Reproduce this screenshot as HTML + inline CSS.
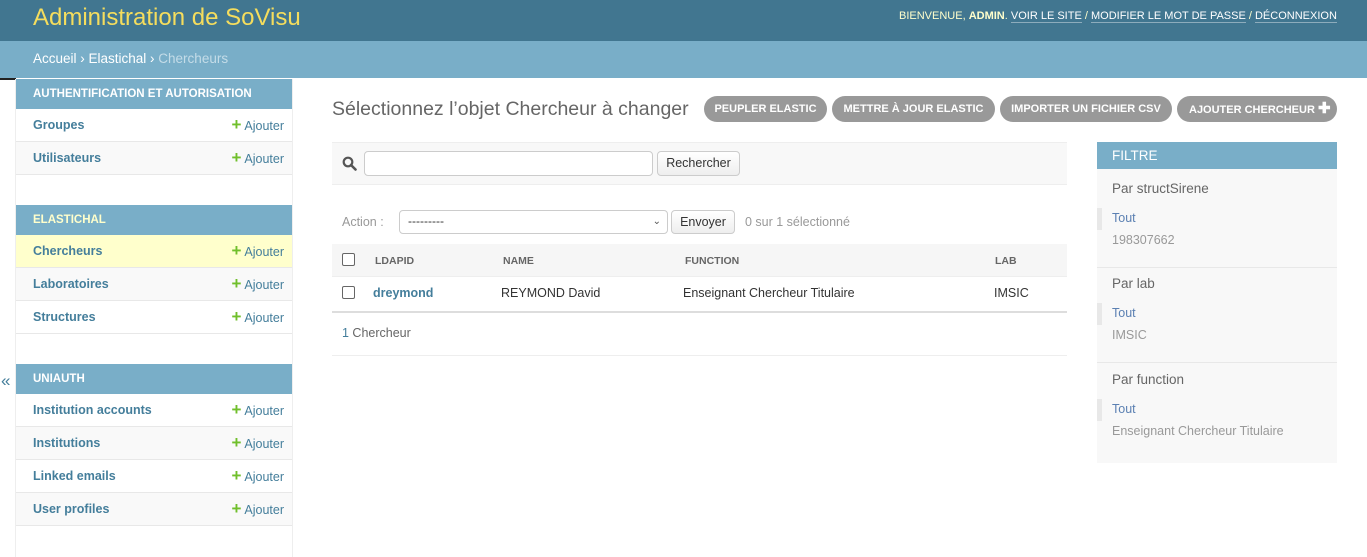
<!DOCTYPE html>
<html><head><meta charset="utf-8"><style>
*{margin:0;padding:0;box-sizing:border-box}
body{width:1367px;height:557px;overflow:hidden;background:#fff;font-family:"Liberation Sans",sans-serif;color:#333;position:relative;font-size:13px}
.a{position:absolute;white-space:nowrap}
#hdr{left:0;top:0;width:1367px;height:41px;background:#417690}
#bc{left:0;top:41px;width:1367px;height:37px;background:#79aec8}
.cap{background:#79aec8;color:#fff;font-size:11.5px;font-weight:bold;height:30px;line-height:30px;padding-left:17px;width:276px;left:16px}
.row{left:16px;width:276px;height:33px;line-height:32px;border-bottom:1px solid #e8e8e8;padding-left:17px;font-weight:bold;color:#447e9b;font-size:12.5px}
.row .ad{position:absolute;right:8px;top:0;font-weight:normal;color:#447e9b;font-size:12.5px}
.row .ad b{color:#70bf2b;font-size:17px;margin-right:3px}
.btn{top:96px;height:26px;line-height:26px;border-radius:13px;background:#999;color:#fff;font-size:11px;font-weight:bold;text-align:center}
.gray{color:#999}
</style></head><body>
<div class="a" id="hdr"></div>
<div class="a" style="left:33px;top:4px;font-size:24px;color:#f5dd5d">Administration de SoVisu</div>
<div class="a" style="left:899px;top:10px;font-size:11px;color:#ffc">BIENVENUE, <b>ADMIN</b>. <span style="color:#fff;border-bottom:1px solid rgba(255,255,255,.4)">VOIR LE SITE</span> / <span style="color:#fff;border-bottom:1px solid rgba(255,255,255,.4)">MODIFIER LE MOT DE PASSE</span> / <span style="color:#fff;border-bottom:1px solid rgba(255,255,255,.4)">DÉCONNEXION</span></div>
<div class="a" id="bc"></div>
<div class="a" style="left:33px;top:51px;font-size:13.5px;color:#fff">Accueil › Elastichal › <span style="color:#c4dce8">Chercheurs</span></div>
<div class="a" style="left:0;top:78px;width:16px;height:2px;background:#222"></div>
<div class="a" style="left:15px;top:79px;width:278px;height:478px;border-left:1px solid #eee;border-right:1px solid #eee"></div>
<div class="a" style="left:1px;top:371px;font-size:17px;color:#447e9b">«</div>

<div class="a cap" style="top:79px">AUTHENTIFICATION ET AUTORISATION</div>
<div class="a row" style="top:109px">Groupes<span class="ad"><b>+</b>Ajouter</span></div>
<div class="a row" style="top:142px;background:#f9f9f9">Utilisateurs<span class="ad"><b>+</b>Ajouter</span></div>

<div class="a cap" style="top:205px;color:#ffc">ELASTICHAL</div>
<div class="a row" style="top:235px;background:#ffc">Chercheurs<span class="ad"><b>+</b>Ajouter</span></div>
<div class="a row" style="top:268px;background:#f9f9f9">Laboratoires<span class="ad"><b>+</b>Ajouter</span></div>
<div class="a row" style="top:301px">Structures<span class="ad"><b>+</b>Ajouter</span></div>

<div class="a cap" style="top:364px">UNIAUTH</div>
<div class="a row" style="top:394px">Institution accounts<span class="ad"><b>+</b>Ajouter</span></div>
<div class="a row" style="top:427px;background:#f9f9f9">Institutions<span class="ad"><b>+</b>Ajouter</span></div>
<div class="a row" style="top:460px">Linked emails<span class="ad"><b>+</b>Ajouter</span></div>
<div class="a row" style="top:493px;background:#f9f9f9">User profiles<span class="ad"><b>+</b>Ajouter</span></div>

<div class="a" style="left:332px;top:98px;font-size:19.5px;color:#666">Sélectionnez l’objet Chercheur à changer</div>
<div class="a btn" style="left:704px;width:123px">PEUPLER ELASTIC</div>
<div class="a btn" style="left:832px;width:163px">METTRE À JOUR ELASTIC</div>
<div class="a btn" style="left:1000px;width:172px">IMPORTER UN FICHIER CSV</div>
<div class="a btn" style="left:1177px;width:160px;text-align:left;padding-left:12px">AJOUTER CHERCHEUR <span style="font-size:15px">✚</span></div>

<div class="a" style="left:332px;top:142px;width:735px;height:43px;background:#f8f8f8;border-top:1px solid #eee;border-bottom:1px solid #eee"></div>
<svg class="a" style="left:342px;top:156px" width="15" height="15" viewBox="0 0 15 15"><circle cx="6" cy="6" r="4.3" fill="none" stroke="#555" stroke-width="2.2"/><path d="M9 9l4.5 4.5" stroke="#555" stroke-width="2.6" stroke-linecap="round"/></svg>
<div class="a" style="left:364px;top:151px;width:289px;height:25px;border:1px solid #ccc;border-radius:4px;background:#fff"></div>
<div class="a" style="left:657px;top:151px;width:83px;height:25px;border:1px solid #ccc;border-radius:4px;background:linear-gradient(#fff,#eee);font-size:12.5px;line-height:23px;text-align:center">Rechercher</div>

<div class="a gray" style="left:342px;top:215px;font-size:12.5px">Action :</div>
<div class="a" style="left:399px;top:210px;width:269px;height:24px;border:1px solid #ccc;border-radius:4px;background:#fff;font-size:12px;line-height:21px;padding-left:8px">---------<span style="position:absolute;right:6px;top:0;font-size:10px;color:#555">⌄</span></div>
<div class="a" style="left:671px;top:210px;width:64px;height:24px;border:1px solid #ccc;border-radius:4px;background:linear-gradient(#fff,#eee);font-size:12.5px;line-height:23px;text-align:center">Envoyer</div>
<div class="a gray" style="left:745px;top:215px;font-size:12.5px">0 sur 1 sélectionné</div>

<div class="a" style="left:332px;top:244px;width:735px;height:33px;background:#f6f6f6;border-bottom:1px solid #eee"></div>
<div class="a" style="left:342px;top:253px;width:13px;height:13px;border:1px solid #666;border-radius:2px;background:#fff"></div>
<div class="a" style="left:375px;top:255px;font-size:10.5px;font-weight:bold;color:#666">LDAPID</div>
<div class="a" style="left:503px;top:255px;font-size:10.5px;font-weight:bold;color:#666">NAME</div>
<div class="a" style="left:685px;top:255px;font-size:10.5px;font-weight:bold;color:#666">FUNCTION</div>
<div class="a" style="left:995px;top:255px;font-size:10.5px;font-weight:bold;color:#666">LAB</div>
<div class="a" style="left:342px;top:286px;width:13px;height:13px;border:1px solid #666;border-radius:2px;background:#fff"></div>
<div class="a" style="left:373px;top:286px;font-size:12.5px;font-weight:bold;color:#447e9b">dreymond</div>
<div class="a" style="left:501px;top:286px;font-size:12.5px">REYMOND David</div>
<div class="a" style="left:683px;top:286px;font-size:12.5px">Enseignant Chercheur Titulaire</div>
<div class="a" style="left:994px;top:286px;font-size:12.5px">IMSIC</div>
<div class="a" style="left:332px;top:311px;width:735px;height:2px;background:#ddd"></div>
<div class="a" style="left:342px;top:326px;font-size:12.5px;color:#666"><span style="color:#447e9b">1</span> Chercheur</div>
<div class="a" style="left:332px;top:355px;width:735px;height:1px;background:#eee"></div>

<div class="a" style="left:1097px;top:142px;width:240px;height:321px;background:#f8f8f8"></div>
<div class="a" style="left:1097px;top:142px;width:240px;height:27px;background:#79aec8;color:#fff;font-size:13.5px;line-height:27px;padding-left:15px">FILTRE</div>
<div class="a" style="left:1112px;top:181px;font-size:13.5px;color:#666">Par structSirene</div>
<div class="a" style="left:1097px;top:208px;width:5px;height:22px;background:#e8e8e8"></div>
<div class="a" style="left:1112px;top:211px;font-size:12.5px;color:#5b80b2">Tout</div>
<div class="a gray" style="left:1112px;top:233px;font-size:12.5px">198307662</div>
<div class="a" style="left:1097px;top:267px;width:240px;height:1px;background:#e8e8e8"></div>
<div class="a" style="left:1112px;top:276px;font-size:13.5px;color:#666">Par lab</div>
<div class="a" style="left:1097px;top:303px;width:5px;height:22px;background:#e8e8e8"></div>
<div class="a" style="left:1112px;top:306px;font-size:12.5px;color:#5b80b2">Tout</div>
<div class="a gray" style="left:1112px;top:328px;font-size:12.5px">IMSIC</div>
<div class="a" style="left:1097px;top:362px;width:240px;height:1px;background:#e8e8e8"></div>
<div class="a" style="left:1112px;top:372px;font-size:13.5px;color:#666">Par function</div>
<div class="a" style="left:1097px;top:399px;width:5px;height:22px;background:#e8e8e8"></div>
<div class="a" style="left:1112px;top:402px;font-size:12.5px;color:#5b80b2">Tout</div>
<div class="a gray" style="left:1112px;top:424px;font-size:12.5px">Enseignant Chercheur Titulaire</div>
</body></html>
